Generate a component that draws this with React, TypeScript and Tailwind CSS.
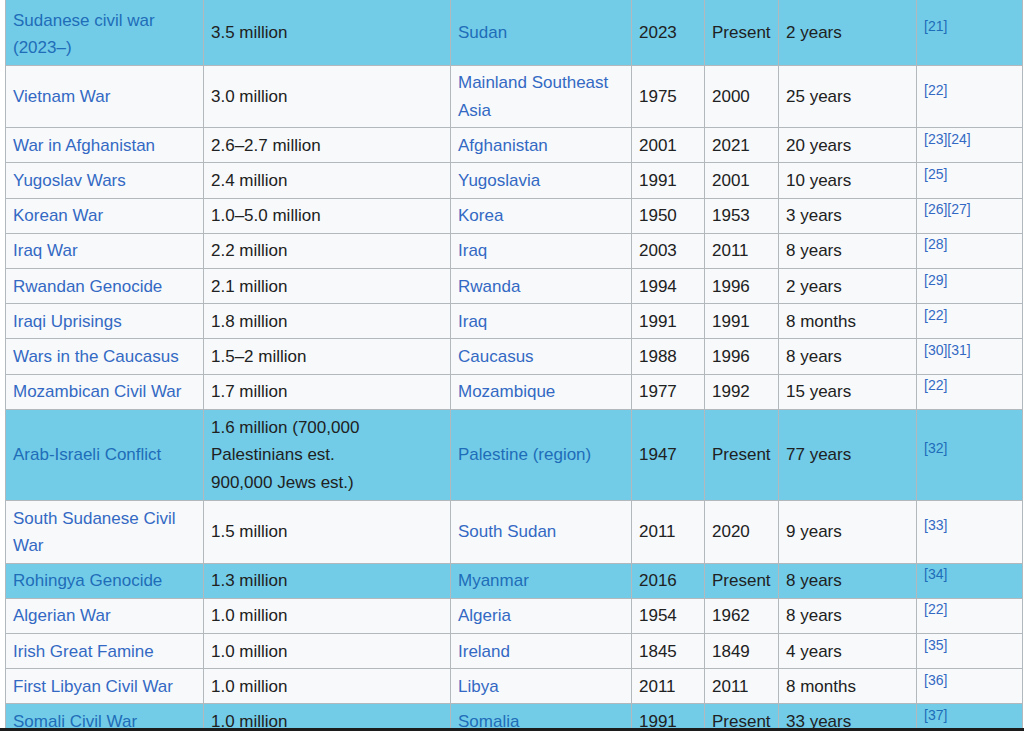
import React from "react";

type Row = {
  name: string;
  deaths: React.ReactNode;
  place: string;
  start: string;
  end: string;
  span: string;
  refs: string[];
  hl?: boolean;
  tall?: boolean;
};

const rows: Row[] = [
  { name: "Sudanese civil war (2023–)", deaths: "3.5 million", place: "Sudan", start: "2023", end: "Present", span: "2 years", refs: ["21"], hl: true },
  { name: "Vietnam War", deaths: "3.0 million", place: "Mainland Southeast Asia", start: "1975", end: "2000", span: "25 years", refs: ["22"] },
  { name: "War in Afghanistan", deaths: "2.6–2.7 million", place: "Afghanistan", start: "2001", end: "2021", span: "20 years", refs: ["23", "24"] },
  { name: "Yugoslav Wars", deaths: "2.4 million", place: "Yugoslavia", start: "1991", end: "2001", span: "10 years", refs: ["25"] },
  { name: "Korean War", deaths: "1.0–5.0 million", place: "Korea", start: "1950", end: "1953", span: "3 years", refs: ["26", "27"] },
  { name: "Iraq War", deaths: "2.2 million", place: "Iraq", start: "2003", end: "2011", span: "8 years", refs: ["28"] },
  { name: "Rwandan Genocide", deaths: "2.1 million", place: "Rwanda", start: "1994", end: "1996", span: "2 years", refs: ["29"] },
  { name: "Iraqi Uprisings", deaths: "1.8 million", place: "Iraq", start: "1991", end: "1991", span: "8 months", refs: ["22"] },
  { name: "Wars in the Caucasus", deaths: "1.5–2 million", place: "Caucasus", start: "1988", end: "1996", span: "8 years", refs: ["30", "31"] },
  { name: "Mozambican Civil War", deaths: "1.7 million", place: "Mozambique", start: "1977", end: "1992", span: "15 years", refs: ["22"] },
  {
    name: "Arab-Israeli Conflict",
    deaths: (
      <>
        1.6 million (700,000
        <br />
        Palestinians est.
        <br />
        900,000 Jews est.)
      </>
    ),
    place: "Palestine (region)",
    start: "1947",
    end: "Present",
    span: "77 years",
    refs: ["32"],
    hl: true,
    tall: true,
  },
  { name: "South Sudanese Civil War", deaths: "1.5 million", place: "South Sudan", start: "2011", end: "2020", span: "9 years", refs: ["33"] },
  { name: "Rohingya Genocide", deaths: "1.3 million", place: "Myanmar", start: "2016", end: "Present", span: "8 years", refs: ["34"], hl: true },
  { name: "Algerian War", deaths: "1.0 million", place: "Algeria", start: "1954", end: "1962", span: "8 years", refs: ["22"] },
  { name: "Irish Great Famine", deaths: "1.0 million", place: "Ireland", start: "1845", end: "1849", span: "4 years", refs: ["35"] },
  { name: "First Libyan Civil War", deaths: "1.0 million", place: "Libya", start: "2011", end: "2011", span: "8 months", refs: ["36"] },
  { name: "Somali Civil War", deaths: "1.0 million", place: "Somalia", start: "1991", end: "Present", span: "33 years", refs: ["37"], hl: true },
];

const cell = "border border-[#b3b8bd] px-[7px] py-[3.5px] align-middle";

const App: React.FC = () => {
  return (
    <div
      className="h-[731px] overflow-hidden flex flex-col bg-white text-[17px] leading-[1.6] text-[#202122]"
      style={{ fontFamily: '"Liberation Sans", Arial, sans-serif' }}
    >
      <div className="flex-1 overflow-hidden pl-[5px]">
        <table className="table-fixed border-collapse w-[1017px] -mt-px bg-[#f8f9fa]">
          <colgroup>
            <col className="w-[198px]" />
            <col className="w-[247px]" />
            <col className="w-[181px]" />
            <col className="w-[73px]" />
            <col className="w-[74px]" />
            <col className="w-[138px]" />
            <col className="w-[106px]" />
          </colgroup>
          <tbody>
            {rows.map((r, i) => {
              const link = r.hl ? "text-[#1f6db8]" : "text-[#3369c4]";
              return (
                <tr key={i} className={r.hl ? "bg-[#72cce8]" : ""}>
                  <td className={`${cell} ${i === 0 ? "pt-[7px]" : ""}`}>
                    <a className={link}>{r.name}</a>
                  </td>
                  <td className={`${cell} ${r.tall ? "py-[4.5px]" : ""}`}>{r.deaths}</td>
                  <td className={cell}>
                    <a className={link}>{r.place}</a>
                  </td>
                  <td className={cell}>{r.start}</td>
                  <td className={cell}>{r.end}</td>
                  <td className={cell}>{r.span}</td>
                  <td className={cell}>
                    <sup className="text-[14px] leading-none whitespace-nowrap">
                      {r.refs.map((ref) => (
                        <a key={ref} className={link}>
                          [{ref}]
                        </a>
                      ))}
                    </sup>
                  </td>
                </tr>
              );
            })}
          </tbody>
        </table>
      </div>
      <div className="h-[3px] bg-[#1c1c1c] shrink-0" />
    </div>
  );
};

export default App;
